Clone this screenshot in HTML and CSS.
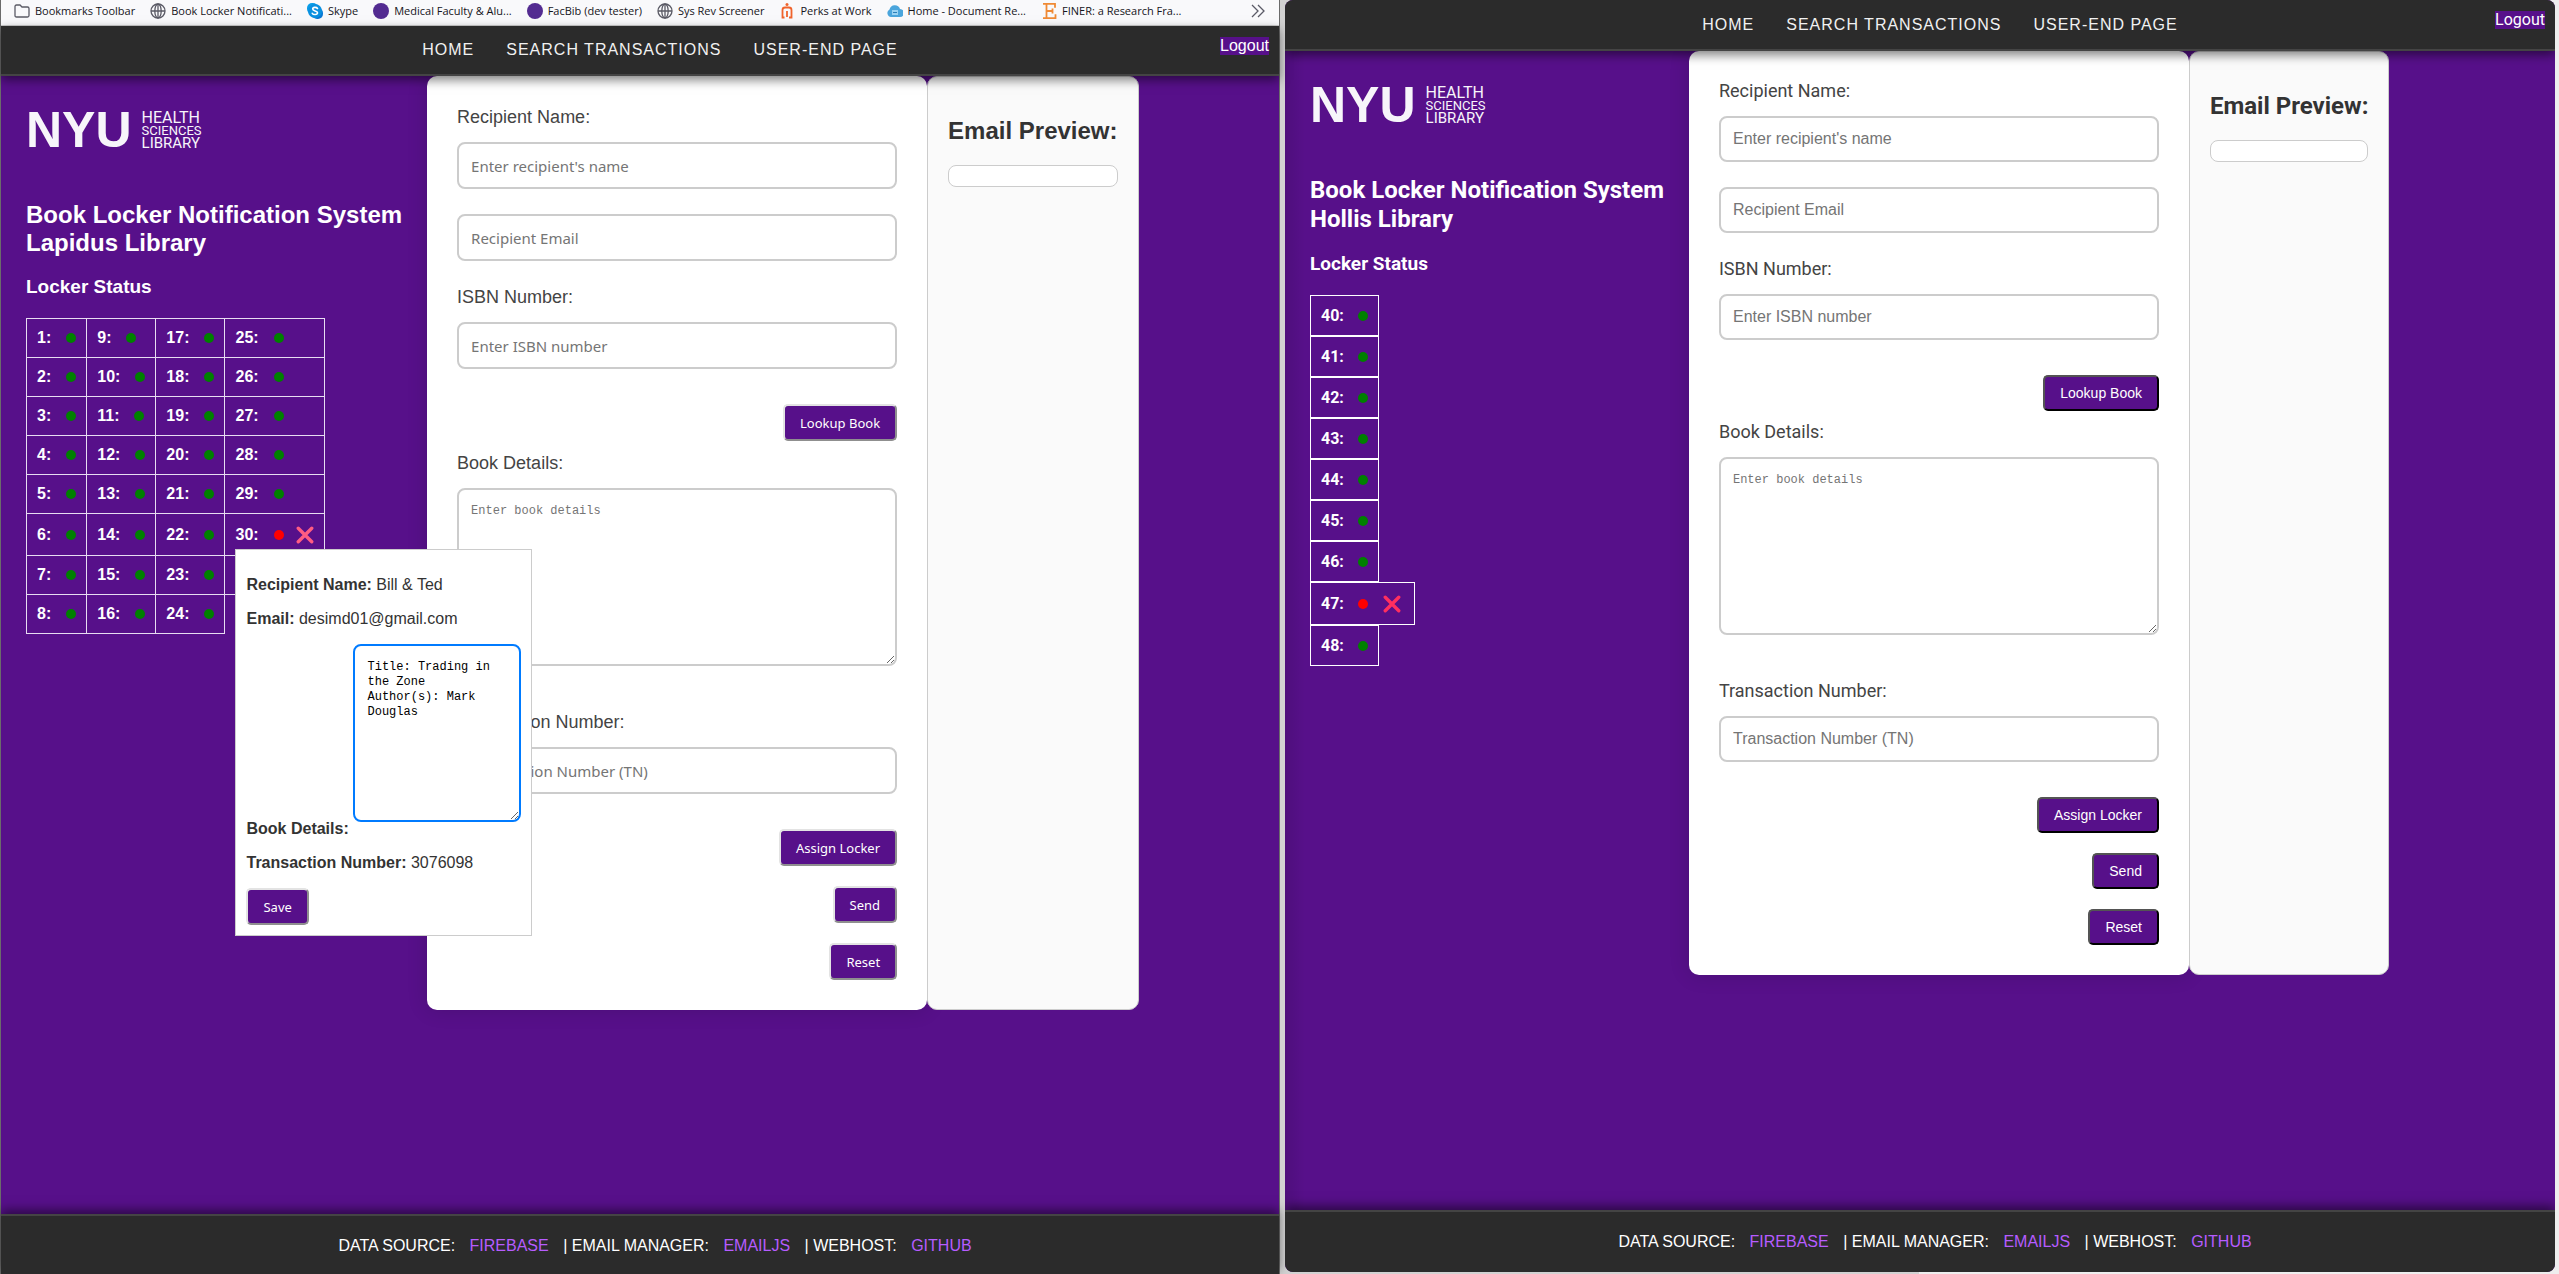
FILE: index.html
```html
<!DOCTYPE html>
<html lang="en">
<head>
<meta charset="utf-8">
<title>Book Locker Notification System</title>
<link rel="stylesheet" href="styles.css">
</head>
<body>
<svg class="defs" aria-hidden="true">
  <symbol id="globe" viewBox="0 0 16 16"><g fill="none" stroke="#5b5b66" stroke-width="1.3"><circle cx="8" cy="8" r="7"/><ellipse cx="8" cy="8" rx="3.2" ry="7"/><path d="M1 8h14M8 1v14"/></g></symbol>
  <symbol id="disc" viewBox="0 0 16 16"><circle cx="8" cy="8" r="8" fill="#532b91"/></symbol>
  <symbol id="cross" viewBox="0 0 16 16"><path d="M2 2l12 12M14 2L2 14" fill="none" stroke="currentColor" stroke-width="3" stroke-linecap="round"/></symbol>
</svg>

<div class="window lapidus">
  <div class="bookmarks">
    <a href="#"><svg viewBox="0 0 16 16"><path d="M1 3.500Q1 2 2.500 2H6l2 2h5.500Q15 4 15 5.500v7q0 1.500-1.500 1.500h-11Q1 14 1 12.500z" fill="none" stroke="#5b5b66" stroke-width="1.300"/></svg>Bookmarks Toolbar</a>
    <a href="#"><svg><use href="#globe"/></svg>Book Locker Notificati...</a>
    <a href="#"><svg viewBox="0 0 16 16"><rect width="11" height="11" rx="5" fill="#0a9ee8"/><rect x="5" y="5" width="11" height="11" rx="5" fill="#0a78d4"/><circle cx="8" cy="8" r="7" fill="#0a90e0"/><path d="M10.500 5.500C9.500 3.900 5.700 4 5.700 6.100c0 2.300 4.800 1.400 4.800 3.700 0 2.200-4.200 2.300-5.200.5" fill="none" stroke="#fff" stroke-width="1.600" stroke-linecap="round"/></svg>Skype</a>
    <a href="#"><svg><use href="#disc"/></svg>Medical Faculty &amp; Alu...</a>
    <a href="#"><svg><use href="#disc"/></svg>FacBib (dev tester)</a>
    <a href="#"><svg><use href="#globe"/></svg>Sys Rev Screener</a>
    <a href="#"><svg viewBox="0 0 16 16"><path d="M5.500 14.500H3.500V7q0-2.500 2.500-2.500h4Q12.500 4.500 12.500 7v7.500H10M8 8v6" fill="none" stroke="#f0642d" stroke-width="1.800"/><circle cx="8" cy="1.500" r="1.500" fill="#f0642d"/></svg>Perks at Work</a>
    <a href="#"><svg viewBox="0 0 16 16"><path d="M4 14a4 4 0 0 1-1.500-7.500A5.500 5.500 0 0 1 13 6a4 4 0 0 1-.5 8z" fill="#4aa5dc"/><path d="M5 7h6v5H5z" fill="#9ad2f2"/><path d="M6 9.500h4" stroke="#2b7fb8"/></svg>Home - Document Re...</a>
    <a href="#"><svg viewBox="0 0 16 16"><path d="M2 .8h12v4M2 15.200h12.500v-4M5.500 1v14M5.500 8h6M11.500 5.500v5" fill="none" stroke="#f08a35" stroke-width="1.800"/></svg>FINER: a Research Fra...</a>
    <button class="overflow" aria-label="More bookmarks"><svg viewBox="0 0 16 16"><path d="M2 2l6 6-6 6M8 2l6 6-6 6" fill="none" stroke="#5b5b66" stroke-width="1.300"/></svg></button>
  </div>
  <div class="page">
    <nav class="nav">
      <a href="#">HOME</a><a href="#">SEARCH TRANSACTIONS</a><a href="#">USER-END PAGE</a>
    </nav>
    <a class="logout" href="#">Logout</a>
    <main class="content">
      <section class="sidebar">
        <div class="logo"><span class="mark">NYU</span><span class="name"><span class="l1">HEALTH</span><span class="l2">SCIENCES</span><span class="l3">LIBRARY</span></span></div>
        <h2>Book Locker Notification System<br>Lapidus Library</h2>
        <h3>Locker Status</h3>
        <table class="lockers">
          <tr><td><div class="cell">1:<i class="dot"></i></div></td><td><div class="cell">9:<i class="dot"></i></div></td><td><div class="cell">17:<i class="dot"></i></div></td><td><div class="cell">25:<i class="dot"></i></div></td></tr>
          <tr><td><div class="cell">2:<i class="dot"></i></div></td><td><div class="cell">10:<i class="dot"></i></div></td><td><div class="cell">18:<i class="dot"></i></div></td><td><div class="cell">26:<i class="dot"></i></div></td></tr>
          <tr><td><div class="cell">3:<i class="dot"></i></div></td><td><div class="cell">11:<i class="dot"></i></div></td><td><div class="cell">19:<i class="dot"></i></div></td><td><div class="cell">27:<i class="dot"></i></div></td></tr>
          <tr><td><div class="cell">4:<i class="dot"></i></div></td><td><div class="cell">12:<i class="dot"></i></div></td><td><div class="cell">20:<i class="dot"></i></div></td><td><div class="cell">28:<i class="dot"></i></div></td></tr>
          <tr><td><div class="cell">5:<i class="dot"></i></div></td><td><div class="cell">13:<i class="dot"></i></div></td><td><div class="cell">21:<i class="dot"></i></div></td><td><div class="cell">29:<i class="dot"></i></div></td></tr>
          <tr><td><div class="cell">6:<i class="dot"></i></div></td><td><div class="cell">14:<i class="dot"></i></div></td><td><div class="cell">22:<i class="dot"></i></div></td><td><div class="cell">30:<i class="dot taken"></i><button class="clear" aria-label="Clear locker 30"><svg><use href="#cross"/></svg></button>
            <div class="popup">
              <p><b>Recipient Name:</b> Bill &amp; Ted</p>
              <p><b>Email:</b> desimd01@gmail.com</p>
              <div class="details"><label for="edit-details">Book Details:</label><textarea id="edit-details">Title: Trading in the Zone
Author(s): Mark Douglas</textarea></div>
              <p><b>Transaction Number:</b> 3076098</p>
              <button class="btn">Save</button>
            </div></div></td></tr>
          <tr><td><div class="cell">7:<i class="dot"></i></div></td><td><div class="cell">15:<i class="dot"></i></div></td><td><div class="cell">23:<i class="dot"></i></div></td><td></td></tr>
          <tr><td><div class="cell">8:<i class="dot"></i></div></td><td><div class="cell">16:<i class="dot"></i></div></td><td><div class="cell">24:<i class="dot"></i></div></td></tr>
        </table>
      </section>
      <div class="panels">
        <form class="form">
          <label for="l-name">Recipient Name:</label>
          <input id="l-name" placeholder="Enter recipient's name">
          <input type="email" aria-label="Recipient Email" placeholder="Recipient Email">
          <label for="l-isbn">ISBN Number:</label>
          <input id="l-isbn" placeholder="Enter ISBN number">
          <button type="button" class="btn lookup">Lookup Book</button>
          <label for="l-book">Book Details:</label>
          <textarea id="l-book" placeholder="Enter book details"></textarea>
          <label for="l-tn">Transaction Number:</label>
          <input id="l-tn" placeholder="Transaction Number (TN)">
          <div class="actions">
            <button type="button" class="btn">Assign Locker</button>
            <button type="button" class="btn">Send</button>
            <button type="reset" class="btn">Reset</button>
          </div>
        </form>
        <aside class="preview"><h2>Email Preview:</h2><div class="preview-box"></div></aside>
      </div>
    </main>
    <footer class="footer">DATA SOURCE: <a href="#">FIREBASE</a> | EMAIL MANAGER: <a href="#">EMAILJS</a> | WEBHOST: <a href="#">GITHUB</a></footer>
  </div>
</div>

<div class="window hollis">
  <div class="page">
    <nav class="nav">
      <a href="#">HOME</a><a href="#">SEARCH TRANSACTIONS</a><a href="#">USER-END PAGE</a>
    </nav>
    <a class="logout" href="#">Logout</a>
    <main class="content">
      <section class="sidebar">
        <div class="logo"><span class="mark">NYU</span><span class="name"><span class="l1">HEALTH</span><span class="l2">SCIENCES</span><span class="l3">LIBRARY</span></span></div>
        <h2>Book Locker Notification System<br>Hollis Library</h2>
        <h3>Locker Status</h3>
        <ul class="locker-list">
          <li class="cell">40:<i class="dot"></i></li>
          <li class="cell">41:<i class="dot"></i></li>
          <li class="cell">42:<i class="dot"></i></li>
          <li class="cell">43:<i class="dot"></i></li>
          <li class="cell">44:<i class="dot"></i></li>
          <li class="cell">45:<i class="dot"></i></li>
          <li class="cell">46:<i class="dot"></i></li>
          <li class="cell">47:<i class="dot taken"></i><button class="clear" aria-label="Clear locker 47"><svg><use href="#cross"/></svg></button></li>
          <li class="cell">48:<i class="dot"></i></li>
        </ul>
      </section>
      <div class="panels">
        <form class="form">
          <label for="r-name">Recipient Name:</label>
          <input id="r-name" placeholder="Enter recipient's name">
          <input type="email" aria-label="Recipient Email" placeholder="Recipient Email">
          <label for="r-isbn">ISBN Number:</label>
          <input id="r-isbn" placeholder="Enter ISBN number">
          <button type="button" class="btn lookup">Lookup Book</button>
          <label for="r-book">Book Details:</label>
          <textarea id="r-book" placeholder="Enter book details"></textarea>
          <label for="r-tn">Transaction Number:</label>
          <input id="r-tn" placeholder="Transaction Number (TN)">
          <div class="actions">
            <button type="button" class="btn">Assign Locker</button>
            <button type="button" class="btn">Send</button>
            <button type="reset" class="btn">Reset</button>
          </div>
        </form>
        <aside class="preview"><h2>Email Preview:</h2><div class="preview-box"></div></aside>
      </div>
    </main>
    <footer class="footer">DATA SOURCE: <a href="#">FIREBASE</a> | EMAIL MANAGER: <a href="#">EMAILJS</a> | WEBHOST: <a href="#">GITHUB</a></footer>
  </div>
</div>
</body>
</html>
```

FILE: styles.css
```css
* { box-sizing: border-box; }

body {
  margin: 0;
  min-height: 100vh;
  display: flex;
  background: #d2d2d2;
  font: 16px/18px "Liberation Sans", Arial, sans-serif;
  color: #333;
}

a { color: inherit; text-decoration: none; }
.defs { position: absolute; width: 0; height: 0; }

/* The two browser windows */
.window {
  flex: 1 1 10px;
  min-width: 0;
  display: flex;
  flex-direction: column;
}
.lapidus {
  flex-basis: 11px;
  border: solid #6b6b6b;
  border-width: 0 1px;
}
.hollis {
  padding: 0 4px 2px 5px;
  background: linear-gradient(90deg, #d2d2d2 50%, #eee 50%);
  font-family: Roboto, sans-serif;
}
.page {
  flex: 1;
  position: relative;
  display: flex;
  flex-direction: column;
  background: #57108a;
}
.hollis .page { border-radius: 8px; overflow: hidden; }

/* Bookmarks toolbar */
.bookmarks {
  height: 26px;
  padding: 0 13px 3px;
  display: flex;
  align-items: center;
  gap: 15px;
  background: #f9f9fb;
  border-bottom: 1px solid #ccc;
  font: 11px/16px "Open Sans", sans-serif;
  color: #15141a;
  white-space: nowrap;
}
.bookmarks a { display: flex; align-items: center; gap: 5px; }
.bookmarks svg { width: 16px; height: 16px; flex: none; display: block; }
.overflow { margin-left: auto; padding: 0; border: 0; background: none; }

/* Header */
.nav {
  position: relative;
  z-index: 2;
  display: flex;
  justify-content: center;
  gap: 32px;
  height: 50px;
  padding-left: 40px;
  align-items: center;
  background: #2b2b2b;
  border-bottom: 2px solid #444;
  box-shadow: 0 4px 10px rgba(0, 0, 0, .5);
  color: #f1f1f1;
  font-family: "Liberation Sans", Arial, sans-serif;
  letter-spacing: 1px;
}
.hollis .nav { height: 51px; }
.logout {
  position: absolute;
  z-index: 3;
  top: 11px;
  right: 10px;
  background: #57108a;
  color: #fff;
}

.content { flex: 1; display: flex; align-items: flex-start; }
.panels { display: flex; }

/* Sidebar */
.sidebar { padding: 36px 25px 0; color: #fff; }
.hollis .sidebar {
  align-self: stretch;
  background: linear-gradient(90deg, rgba(0, 0, 0, .1), transparent 20px);
}
.logo { display: flex; align-items: center; gap: 10px; height: 37px; color: #f7f5fa; }
.mark { font: bold 50px/37px "Liberation Sans", Arial, sans-serif; }
.name { display: flex; flex-direction: column; font: 15px/13px Roboto, sans-serif; }
.l1 { font-size: 16px; }
.l2 { font-size: 13px; }
h2 { font-size: 24px; line-height: 28px; margin: 0; white-space: nowrap; }
.sidebar h2 { margin-top: 52px; }
.hollis .sidebar h2 { line-height: 29px; }
h3 { font-size: 19px; line-height: 22px; margin: 19px 0 20px; }

.lockers { border-collapse: collapse; font-weight: bold; }
.lockers td { border: 1px solid #e8dcf2; padding: 10px; }
.cell { position: relative; display: flex; align-items: center; }
.dot { width: 10px; height: 10px; margin-left: 14px; border-radius: 50%; background: green; }
.lockers .dot { margin-left: 15px; }
.taken { background: red; }
.clear {
  display: flex;
  align-items: center;
  justify-content: center;
  width: 18px;
  height: 21px;
  margin-left: 12px;
  padding: 0;
  border: 0;
  background: none;
  color: #ff5c82;
}
.clear svg { width: 18px; height: 18px; }

.locker-list {
  list-style: none;
  margin: 0;
  padding: 0;
  display: flex;
  flex-direction: column;
  align-items: flex-start;
  font-weight: bold;
}
.locker-list .cell { min-height: 41px; padding: 10px; border: 1px solid #fff; }
.locker-list .clear { width: 24px; color: #ff2f5f; }

/* Locker details popup */
.popup {
  position: absolute;
  z-index: 5;
  top: 25px;
  left: 0;
  width: 297px;
  padding: 10px;
  background: #fff;
  border: 1px solid #ccc;
  color: #333;
  font-weight: normal;
}
.popup p { margin: 16px 0; }
.details { display: flex; align-items: flex-end; justify-content: space-between; font-weight: bold; }
.popup textarea { width: 168px; margin-bottom: 16px; border-color: #007bff; color: #000; }

/* Notification form */
.form {
  width: 500px;
  padding: 30px;
  display: flex;
  flex-direction: column;
  background: #fff;
  border-radius: 10px;
  box-shadow: 0 0 20px rgba(0, 0, 0, .15);
}
.form label { font-size: 18px; line-height: 22px; margin-bottom: 14px; color: #444; }
input, textarea {
  border: 2px solid #ccc;
  border-radius: 8px;
  background: #fff;
  padding: 12px;
}
input { height: 47px; margin-bottom: 25px; font: 15px/18px "Noto Sans", sans-serif; }
textarea { height: 178px; padding-top: 14px; font: 12px/15px "Liberation Mono", monospace; resize: both; }
.form textarea { margin-bottom: 45px; }
::placeholder { color: #757575; }

.btn {
  padding: 0 15px;
  height: 37px;
  border: 2px outset #e3e3e3;
  border-radius: 5px;
  background: #57108a;
  color: #fff;
  font: 13px/18px "Noto Sans", sans-serif;
}
.lookup { align-self: flex-end; margin: 10px 0 11px; }
.actions { display: flex; flex-direction: column; align-items: flex-end; gap: 20px; margin-top: 10px; }

.hollis .form { padding-top: 29px; }
.hollis .lookup { margin-bottom: 10px; }
.hollis input { height: 46px; font: 16px/18px "Liberation Sans", Arial, sans-serif; }
.hollis .btn { height: 36px; border-color: #000; font: 14px/18px "Liberation Sans", Arial, sans-serif; }

/* Email preview */
.preview {
  padding: 20px;
  background: #fafafa;
  border: 1px solid #ccc;
  border-radius: 10px;
}
.preview h2 { margin: 20px 0; }
.preview-box { height: 22px; background: #fff; border: 1px solid #ccc; border-radius: 8px; }

/* Footer */
.footer {
  position: relative;
  height: 60px;
  padding-left: 40px;
  text-align: center;
  line-height: 60px;
  background: #2b2b2b;
  border-top: 2px solid #444;
  box-shadow: 0 -4px 10px rgba(0, 0, 0, .5);
  color: #fff;
}
.hollis .footer { height: 62px; font-family: "Liberation Sans", Arial, sans-serif; }
.footer a { margin: 0 10px; color: #b65cff; }
```
